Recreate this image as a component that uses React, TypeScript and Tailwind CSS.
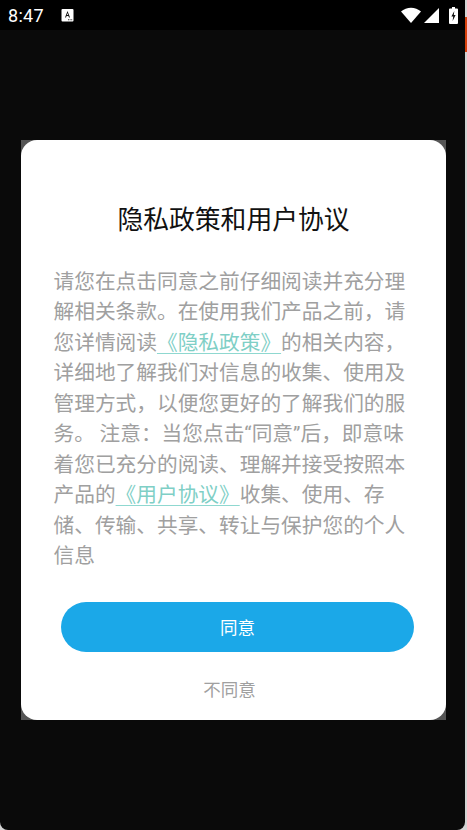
export default function App() {
  const font = { fontFamily: '"Noto Sans CJK SC", sans-serif' };
  return (
    <div className="w-[467px] h-[830px] bg-[#d4d4d4] overflow-hidden relative" style={font}>
      <div className="absolute right-0 top-[17px] w-[2px] h-[35px] bg-[#d8430f]" />
      <div className="w-[465px] h-[830px] bg-[#0a0a0a] rounded-b-[8px] overflow-hidden flex flex-col relative">
        <div className="h-[30px] bg-black flex items-center pl-[8px] pr-[7px] text-white">
          <span className="text-[18px] leading-none tracking-[0.3px] mt-[1px]" style={{ fontFamily: 'Roboto, sans-serif' }}>8:47</span>
          <svg width="13" height="14" viewBox="0 0 13 14" className="ml-[17px]">
            <rect x="0.5" y="1" width="12" height="12.5" rx="1" fill="#fff" />
            <path d="M6.5 3 L9 9.5 H8 L7.4 8 H5.6 L5 9.5 H4 Z M6.5 5 L5.9 7 H7.1 Z" fill="#111" />
            <path d="M7 11.2h1v1h-1zM8.6 11.2h1v1h-1zM10.2 11.2h1v1h-1z" fill="#333" />
          </svg>
          <div className="flex-1" />
          <svg width="20" height="16" viewBox="0 0 20 16">
            <path d="M0 4.6 C5.5 -0.6 14.5 -0.6 20 4.6 L10 16 Z" fill="#fff" />
          </svg>
          <svg width="15" height="15" viewBox="0 0 15 15" className="ml-[3px]">
            <path d="M15 0 V15 H0 Z" fill="#fff" />
          </svg>
          <svg width="9" height="17" viewBox="0 0 9 17" className="ml-[10px]">
            <path d="M3 0h3v1.5h2a1 1 0 0 1 1 1V16a1 1 0 0 1-1 1H1a1 1 0 0 1-1-1V2.5a1 1 0 0 1 1-1h2z" fill="#fff" />
            <path d="M5.3 4 L2.4 9.6 H4.2 L3.6 14 L6.6 8 H4.8 Z" fill="#111" />
          </svg>
        </div>
        <div className="mt-[110px] ml-[21px] w-[425px] h-[580px] bg-[#555555]">
          <div className="w-full h-full bg-white rounded-[16px] flex flex-col items-center">
            <h1 className="mt-[60px] text-[25.8px] leading-[36px] font-normal text-[#111111] text-center">隐私政策和用户协议</h1>
            <p className="mt-[29px] ml-[32.5px] self-start w-[360px] text-[20.7px] leading-[30.45px] font-normal text-[#a0a0a0]">
              请您在点击同意之前仔细阅读并充分理解相关条款。在使用我们产品之前，请您详情阅读
              <span className="text-[#7fcfc6] underline decoration-[1px] decoration-[#8fd8d0] underline-offset-[3px]">《隐私政策》</span>
              的相关内容，详细地了解我们对信息的收集、使用及管理方式，以便您更好的了解我们的服务。 注意：当您点击
              <span className="leading-[10px]" style={{ fontFamily: 'Roboto, sans-serif' }}>“</span>同意<span className="leading-[10px]" style={{ fontFamily: 'Roboto, sans-serif' }}>”</span>
              后，即意味着您已充分的阅读、理解并接受按照本产品的
              <span className="text-[#7fcfc6] underline decoration-[1px] decoration-[#8fd8d0] underline-offset-[3px]">《用户协议》</span>
              收集、使用、存储、传输、共享、转让与保护您的个人信息
            </p>
            <button className="mt-[32.5px] ml-[40px] self-start w-[353px] h-[49.5px] shrink-0 rounded-full bg-[#1ba8e8] text-white text-[17.5px] font-normal">同意</button>
            <div className="mt-[24px] ml-[-8px] text-[17.5px] leading-[26px] font-normal text-[#a0a0a0]">不同意</div>
          </div>
        </div>
      </div>
    </div>
  );
}
